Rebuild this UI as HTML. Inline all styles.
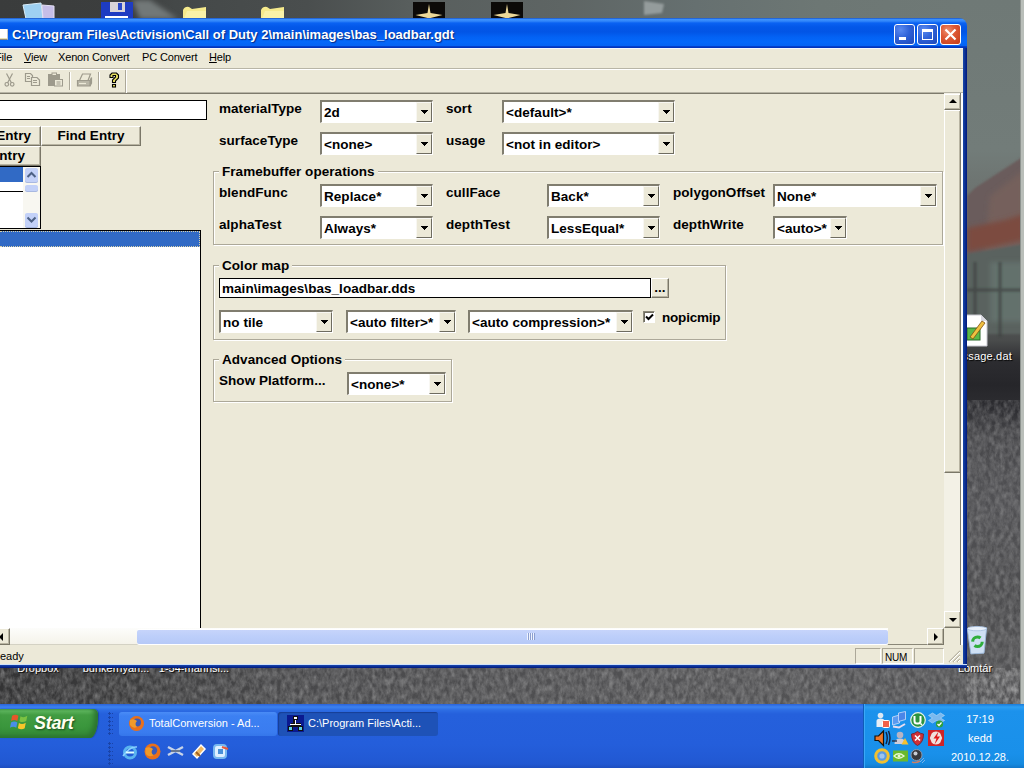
<!DOCTYPE html>
<html><head><meta charset="utf-8"><title>asset manager</title>
<style>
*{box-sizing:border-box;margin:0;padding:0}
html,body{width:1024px;height:768px;overflow:hidden}
body{position:relative;background:#4a4d4c;font-family:"Liberation Sans",sans-serif;font-size:11px;color:#000}
.a{position:absolute}
/* desktop */
#desk{left:0;top:0;width:1024px;height:768px;background:#454847}
#dtop{left:0;top:0;width:1024px;height:20px;background:linear-gradient(90deg,#3a3c3c 0,#3c3e3e 12%,#444848 17%,#4a4e4e 30%,#585e5d 40%,#5e6564 55%,#667070 68%,#6d7774 80%,#707a77 100%)}
#dright{left:960px;top:0;width:64px;height:704px;background:linear-gradient(180deg,#6f7976 0,#727c79 150px,#6e7572 180px,#666866 262px,#5a605c 300px,#4a4c4c 340px,#2c2c30 362px,#26262a 385px,#2e2e32 410px,#47474a 435px,#505053 500px,#4c4c4e 600px,#555557 704px)}
#dbot{left:0;top:660px;width:967px;height:44px;background:linear-gradient(90deg,#333334 0,#3c3c3d 15%,#48484a 30%,#4e4e50 50%,#535355 75%,#515153 100%)}
/* window */
#win{left:-4px;top:18px;width:971px;height:650px}
#wbg{left:0;top:30px;width:971px;height:620px;background:#ece9d8}
#tbar{left:0;top:0;width:971px;height:30px;border-radius:0 8px 0 0;background:linear-gradient(180deg,#1a52c4 0,#3a90ff 1.500px,#3388fa 3px,#0a62f2 5px,#0357e8 9px,#0255e6 14px,#0362f4 19px,#0468fa 24px,#0564f4 27.500px,#0440cc 28.500px,#0030b4 30px)}
#bl{left:0;top:30px;width:4px;height:620px;background:#0c3498}
#br{left:967px;top:30px;width:4px;height:620px;background:linear-gradient(90deg,#1848a8,#00187c)}
#bb{left:0;top:646px;width:971px;height:4px;background:linear-gradient(180deg,#cfe0f8 0,#cfe0f8 1px,#1848b0 1px,#00187c 4px)}
#title{left:16px;top:9px;color:#fff;font-weight:bold;font-size:13px;white-space:nowrap;text-shadow:1px 1px 1px #0a2a80}
.wb{top:6px;width:21px;height:21px;border:1px solid #fff;border-radius:3px;background:radial-gradient(circle at 30% 25%,#5a8af0 0,#2f62d8 45%,#1f48b8 100%)}
#menu{left:4px;top:30px;width:963px;height:21px;background:#ece9d8;border-bottom:1px solid #b8b5a6;border-top:1px solid #f6f8fc}
.mi{top:2px;font-size:11px;white-space:nowrap;letter-spacing:-.15px}
#tool{left:4px;top:51px;width:963px;height:25px;background:#ece9d8;border-top:1px solid #fff;border-bottom:1px solid #7d7a6c;box-shadow:inset 0 -1px 0 #b8b5a6}
/* client */
.lb{font-weight:bold;font-size:13.5px;white-space:nowrap;letter-spacing:.05px;line-height:16px}
.cb{height:23px;background:#fff;border:solid;border-width:2px 1px 1px 2px;border-color:#807d6f #fff #fff #807d6f}
.cb span{position:absolute;left:2px;top:3px;font-weight:bold;font-size:13.5px;white-space:nowrap;letter-spacing:.05px;line-height:16px}
.cb i{position:absolute;right:0;top:0;width:16px;height:20px;background:#ece9d8;border:1px solid;border-color:#f8f7f2 #6e6c60 #6e6c60 #f8f7f2}
.cb i:after{content:"";position:absolute;left:4px;top:7px;width:7px;height:4px;background:linear-gradient(#000,#000) 0 0/7px 1px no-repeat,linear-gradient(#000,#000) 1px 1px/5px 1px no-repeat,linear-gradient(#000,#000) 2px 2px/3px 1px no-repeat,linear-gradient(#000,#000) 3px 3px/1px 1px no-repeat}
.gb{border:1px solid #aca899;box-shadow:1px 1px 0 #fff, inset 1px 1px 0 #fff}
.lg{background:#ece9d8;padding:0 3px}

.btn{background:#ece9d8;border:1px solid;border-color:#fff #7a7768 #7a7768 #fff;box-shadow:inset -1px -1px 0 #b8b4a2}
.tri{position:absolute;width:0;height:0;border:4px solid transparent}
.sbb{width:13px;height:14px;background:#c3d1f8;border-radius:2px;box-shadow:0 1px 0 #a8b8e0}
.pane{border:1px solid;border-color:#aca899 #fff #fff #aca899}

.tk{height:24px;border-radius:3px;color:#fff;font-size:11px;white-space:nowrap}
.dots{width:5px;background:radial-gradient(circle at 1.5px 1.5px,#1a44a8 1px,transparent 1.4px) 0 0/4px 4px}
.clk{width:60px;text-align:center;color:#fff;font-size:11px}
.dl{color:#fff;font-size:11px;text-align:center;white-space:nowrap;text-shadow:1px 1px 1px #000}
</style></head><body>
<div id="desk" class="a"></div>
<div id="dtop" class="a"></div>
<div id="dright" class="a"></div>
<div id="dbot" class="a"></div>
<svg class="a" style="left:0;top:0" width="1024" height="704" viewBox="0 0 1024 704">
 <defs>
  <filter id="gr" x="0" y="0" width="100%" height="100%"><feTurbulence type="fractalNoise" baseFrequency="0.22 0.14" numOctaves="3" seed="7"/><feColorMatrix type="matrix" values="0 0 0 0 0.55  0 0 0 0 0.55  0 0 0 0 0.55  0.9 0.9 0 0 -0.62"/></filter>
  <filter id="bl2"><feGaussianBlur stdDeviation="2.500"/></filter>
  <filter id="bl1"><feGaussianBlur stdDeviation="1"/></filter>
 </defs>
 <!-- smudges in top strip -->
 <path d="M132 0 L150 0 L178 19 L140 19Z" fill="#727878" filter="url(#bl2)"/>
 <path d="M644 1 l20 3 l-2 9 l-18 2z" fill="#949c9c" filter="url(#bl1)"/>
 <!-- building on the right -->
 <path d="M1024 156 L975 188 L967 196 L967 270 L1024 270Z" fill="#6a5c5b" filter="url(#bl1)"/>
 <path d="M1024 170 L990 196 L984 262 L1024 262Z" fill="#75605c" filter="url(#bl2)"/>
 <path d="M967 228 L1005 220 L1024 214 L1024 240 L967 252Z" fill="#7c4c40" filter="url(#bl2)"/>
 <path d="M967 254 L1024 244 v90 h-57z" fill="#5a625f" filter="url(#bl1)"/>
 <path d="M990 262 h34 v60 h-34z" fill="#66756f" filter="url(#bl2)" opacity=".8"/>
 <path d="M975 262 v75 M1000 262 v75 M967 290 h57" stroke="#3c403f" stroke-width="3" filter="url(#bl1)" opacity=".7"/>
 <!-- grass texture -->
 <rect x="0" y="668" width="1024" height="36" filter="url(#gr)" opacity=".55"/>
 <rect x="967" y="400" width="57" height="304" filter="url(#gr)" opacity=".45"/>
 <rect x="1021" y="0" width="3" height="704" fill="#b9beb9"/>
 <rect x="1020" y="0" width="1" height="704" fill="#8e9490"/>
</svg>
<!-- desktop icons (top row, mostly hidden) -->
<svg class="a" style="left:0;top:0" width="540" height="20" viewBox="0 0 540 20">
 <path d="M23 5 L41 3 L43 19 L26 19Z" fill="#9ed0f2" stroke="#d8ecf8" stroke-width="1"/>
 <path d="M42 5 L54 6 L54 19 L43 19Z" fill="#c6bee8" stroke="#e4e0f4" stroke-width="1"/>
 <rect x="101" y="2" width="32" height="18" fill="#1e3cc2"/><rect x="110" y="2" width="15" height="10" fill="#d8d4d8"/><rect x="118" y="3" width="4" height="7" fill="#2a48c8"/><rect x="105" y="16" width="23" height="2" fill="#fff"/>
 <path d="M183 10 q2-4 6-3 l3 2 l14-2 v12 h-23z" fill="#f6ea8c"/><path d="M184 19 l3-8 h19 v8z" fill="#faf2a8"/>
 <path d="M261 10 q2-4 6-3 l3 2 l14-2 v12 h-23z" fill="#f6ea8c"/><path d="M262 19 l3-8 h19 v8z" fill="#faf2a8"/>
 <rect x="413" y="2" width="32" height="17" fill="#0c0a08"/><path d="M429 4 l1.500 9 l12 2 l-12 3 h-3 l-12-3 l12-2z" fill="#ecd898"/>
 <rect x="491" y="2" width="32" height="17" fill="#0c0a08"/><path d="M507 4 l1.500 9 l12 2 l-12 3 h-3 l-12-3 l12-2z" fill="#ecd898"/>
</svg>
<!-- desktop icon labels / right icons -->
<div class="a dl" style="left:8px;top:662px;width:60px">Dropbox</div>
<div class="a dl" style="left:78px;top:662px;width:76px">bunkerhyan...</div>
<div class="a dl" style="left:156px;top:662px;width:76px">1-54-mannsi...</div>
<div class="a dl" style="left:934px;top:350px;width:78px;text-align:right;letter-spacing:.2px">message.dat</div>
<div class="a dl" style="left:948px;top:662px;width:54px">Lomtár</div>
<svg class="a" style="left:960px;top:312px" width="30" height="36" viewBox="0 0 30 36"><path d="M4 3 h17 l6 6 v25 h-23z" fill="#fff" stroke="#c8c8d0"/><path d="M21 3 v6 h6z" fill="#d8d8e0"/><rect x="7" y="16" width="13" height="12" fill="#5ab848" stroke="#2a6a28"/><path d="M10 25 L22 9 L25 11 L13 27Z" fill="#f0c040" stroke="#805010" stroke-width=".8"/></svg>
<svg class="a" style="left:963px;top:624px" width="28" height="32" viewBox="0 0 32 36"><path d="M5 6 L27 4 L24 33 L9 34Z" fill="#cfe0f4" stroke="#9ab8dc"/><ellipse cx="16" cy="5" rx="11" ry="2.500" fill="#e8f0fa" stroke="#a8c0e0"/><circle cx="16.500" cy="20" r="5.500" fill="none" stroke="#2fae3c" stroke-width="3.500" stroke-dasharray="12 5"/></svg>
<div id="win" class="a">
 <div id="wbg" class="a"></div><div id="tbar" class="a"></div>
 <div id="bl" class="a"></div><div id="br" class="a"></div><div id="bb" class="a"></div>
 <div id="title" class="a">C:\Program Files\Activision\Call of Duty 2\main\images\bas_loadbar.gdt</div>
 <div class="a wb" style="left:898px"><div class="a" style="left:4px;top:12px;width:7px;height:3px;background:#fff"></div></div>
 <div class="a wb" style="left:921px"><div class="a" style="left:4px;top:4px;width:11px;height:11px;border:1px solid #fff;border-top:3px solid #fff"></div></div>
 <div class="a wb" style="left:944px;background:radial-gradient(circle at 35% 30%,#ee9070 0,#de5a36 40%,#c43a18 100%)"><svg class="a" style="left:0;top:0" width="19" height="19" viewBox="0 0 19 19"><path d="M4.500 4.500l10 10M14.500 4.500l-10 10" stroke="#fff" stroke-width="2.200"/></svg></div>
 <div class="a" style="left:0;top:11px;width:12px;height:11px;background:#fff;border-right:1px solid #c8c8c8;border-bottom:1px solid #888;box-shadow:0 -1px 0 #e8e0b0 inset"></div>
 <div id="menu" class="a">
  <span class="a mi" style="left:-5px">File</span>
  <span class="a mi" style="left:24px"><u>V</u>iew</span>
  <span class="a mi" style="left:58px">Xenon Convert</span>
  <span class="a mi" style="left:142px">PC Convert</span>
  <span class="a mi" style="left:209px"><u>H</u>elp</span>
 </div>
 <div id="tool" class="a">
  <svg class="a" style="left:0;top:2px" width="130" height="18" viewBox="0 72 130 18">
   <g fill="none" stroke="#9d9a8c" stroke-width="1.2">
    <path d="M6.5 73.5 L11.5 83 M12.5 73.5 L7.5 83"/><circle cx="6.8" cy="84.3" r="1.8"/><circle cx="12.2" cy="84.3" r="1.8"/>
    <path d="M25.5 73.5h5l2 2v6h-7z"/><path d="M27 76.5h3M27 78.500h3" stroke-width="1"/>
    <path d="M31.500 77.500h5.500l2.500 2.500v5.500h-8z" fill="#ece9d8"/><path d="M33 80.500h4M33 82.500h4" stroke-width="1"/>
    <path d="M77.500 80.500h12.500v5.500h-12.500z" fill="#b8b5a6"/><path d="M79.500 80.500l3-6.500h8l-2.500 6.500"/><path d="M90 80.500l1.500-3v5.500l-1.500 3" fill="#9d9a8c"/><path d="M79 83.500h7" stroke="#ece9d8"/>
   </g>
   <rect x="48.500" y="74.500" width="11" height="11" fill="#9d9a8c" stroke="#9d9a8c"/><rect x="52" y="73" width="4.500" height="2.500" fill="#ece9d8" stroke="#9d9a8c"/>
   <rect x="54.500" y="79.500" width="8" height="6.500" fill="#ece9d8" stroke="#9d9a8c"/><path d="M56.500 82h4M56.500 84h4" stroke="#9d9a8c"/>
   <path d="M69.500 72v18M98.500 72v18" stroke="#aca899"/><path d="M70.500 72v18M99.500 72v18" stroke="#fff"/>
   <path d="M110 77.500v-2.500l2-2h4.500l2 2v3l-3 3v1.500h-3v-2.500l3-3v-1.500h-2.500v2z" fill="#e8e060" stroke="#000" stroke-width="1.100"/><rect x="112.500" y="84.500" width="3" height="2.500" fill="#e8e060" stroke="#000" stroke-width="1.100"/>
  </svg>
  <div class="a" style="left:125px;top:0;width:1px;height:23px;background:#aca899"></div>
  <div class="a" style="left:126px;top:0;width:1px;height:23px;background:#fff"></div>
 </div>
</div>

<!-- client area in page coordinates -->
<div id="client" class="a" style="left:0;top:93px;width:963px;height:552px">
 <!-- left panel -->
 <div class="a" style="left:-2px;top:7px;width:209px;height:20px;background:#fff;border:1px solid #000"></div>
 <div class="a btn" style="left:-10px;top:33px;width:51px;height:20px"><span class="lb" style="position:absolute;right:9px;top:1px">New Entry</span></div>
 <div class="a btn" style="left:41px;top:33px;width:100px;height:20px;text-align:center"><span class="lb" style="position:relative;top:1px">Find Entry</span></div>
 <div class="a btn" style="left:-10px;top:53px;width:51px;height:20px"><span class="lb" style="position:absolute;right:15px;top:1px">Del Entry</span></div>
 <div class="a" style="left:-2px;top:73px;width:43px;height:63px;background:#fff;border:1px solid #000"></div>
 <div class="a" style="left:0;top:74px;width:23px;height:15px;background:#316ac5"></div>
 <div class="a" style="left:0;top:98px;width:23px;height:1px;background:#000"></div>
 <div class="a" style="left:23px;top:74px;width:17px;height:61px;background:#f8f7f1"></div>
 <div class="a sbb" style="left:25px;top:75px"><svg width="13" height="14" viewBox="0 0 13 14"><path d="M2.500 9 L6.500 5 L10.500 9" fill="none" stroke="#4d6185" stroke-width="2"/></svg></div>
 <div class="a sbb" style="left:25px;top:92px;height:6px"></div>
 <div class="a sbb" style="left:25px;top:120px"><svg width="13" height="14" viewBox="0 0 13 14"><path d="M2.500 4.500 L6.500 8.500 L10.500 4.500" fill="none" stroke="#4d6185" stroke-width="2"/></svg></div>
 <div class="a" style="left:-2px;top:137px;width:203px;height:399px;background:#fff;border:1px solid #000"></div>
 <div class="a" style="left:0;top:138px;width:200px;height:16px;background:#316ac5;border:1px dotted #d8d0a8;border-left:0"></div>

 <!-- right panel -->
 <span class="a lb" style="left:219px;top:8px">materialType</span>
 <div class="a cb" style="left:320px;top:7px;width:113px"><span>2d</span><i></i></div>
 <span class="a lb" style="left:446px;top:8px">sort</span>
 <div class="a cb" style="left:502px;top:7px;width:173px"><span>&lt;default&gt;*</span><i></i></div>
 <span class="a lb" style="left:219px;top:40px">surfaceType</span>
 <div class="a cb" style="left:320px;top:39px;width:113px"><span>&lt;none&gt;</span><i></i></div>
 <span class="a lb" style="left:446px;top:40px">usage</span>
 <div class="a cb" style="left:502px;top:39px;width:173px"><span>&lt;not in editor&gt;</span><i></i></div>

 <div class="a gb" style="left:213px;top:78px;width:730px;height:74px"></div>
 <span class="a lb lg" style="left:219px;top:71px">Framebuffer operations</span>
 <span class="a lb" style="left:219px;top:92px">blendFunc</span>
 <div class="a cb" style="left:320px;top:91px;width:113px"><span>Replace*</span><i></i></div>
 <span class="a lb" style="left:446px;top:92px">cullFace</span>
 <div class="a cb" style="left:547px;top:91px;width:113px"><span>Back*</span><i></i></div>
 <span class="a lb" style="left:673px;top:92px">polygonOffset</span>
 <div class="a cb" style="left:773px;top:91px;width:164px"><span>None*</span><i></i></div>
 <span class="a lb" style="left:219px;top:124px">alphaTest</span>
 <div class="a cb" style="left:320px;top:123px;width:113px"><span>Always*</span><i></i></div>
 <span class="a lb" style="left:446px;top:124px">depthTest</span>
 <div class="a cb" style="left:547px;top:123px;width:113px"><span>LessEqual*</span><i></i></div>
 <span class="a lb" style="left:673px;top:124px">depthWrite</span>
 <div class="a cb" style="left:773px;top:123px;width:74px"><span>&lt;auto&gt;*</span><i></i></div>

 <div class="a gb" style="left:213px;top:172px;width:513px;height:75px"></div>
 <span class="a lb lg" style="left:219px;top:165px">Color map</span>
 <div class="a" style="left:219px;top:185px;width:432px;height:20px;background:#fff;border:1px solid #000"><span class="lb" style="position:absolute;left:2px;top:2px">main\images\bas_loadbar.dds</span></div>
 <div class="a btn" style="left:651px;top:185px;width:18px;height:20px;text-align:center"><span class="lb" style="position:relative;top:1px;letter-spacing:0">...</span></div>
 <div class="a cb" style="left:219px;top:217px;width:114px"><span>no tile</span><i></i></div>
 <div class="a cb" style="left:346px;top:217px;width:110px"><span>&lt;auto filter&gt;*</span><i></i></div>
 <div class="a cb" style="left:468px;top:217px;width:165px"><span>&lt;auto compression&gt;*</span><i></i></div>
 <div class="a" style="left:643px;top:218px;width:12px;height:12px;background:#fff;border:1px solid;border-color:#8a8778 #fff #fff #8a8778;box-shadow:inset 1px 1px 0 #6e6c60"><svg class="a" style="left:1px;top:1px" width="9" height="9" viewBox="0 0 9 9"><path d="M1 3.5 L3.5 6 L8 1.5" fill="none" stroke="#000" stroke-width="2"/></svg></div>
 <span class="a lb" style="left:662px;top:217px;letter-spacing:-.2px">nopicmip</span>

 <div class="a gb" style="left:213px;top:266px;width:239px;height:43px"></div>
 <span class="a lb lg" style="left:219px;top:259px">Advanced Options</span>
 <span class="a lb" style="left:219px;top:280px">Show Platform...</span>
 <div class="a cb" style="left:347px;top:279px;width:99px"><span>&lt;none&gt;*</span><i></i></div>

 <!-- v scrollbar -->
 <div class="a" style="left:944px;top:0;width:17px;height:535px;background:#f3f1e6"></div>
 <div class="a btn" style="left:944px;top:1px;width:17px;height:16px"><b class="tri" style="left:4px;top:4px;border-bottom:4px solid #000;border-top:0"></b></div>
 <div class="a btn" style="left:944px;top:518px;width:17px;height:17px"><b class="tri" style="left:4px;top:6px;border-top:4px solid #000;border-bottom:0"></b></div>
 <div class="a btn" style="left:944px;top:17px;width:17px;height:363px"></div>
 <!-- h scrollbar -->
 <div class="a" style="left:0;top:535px;width:944px;height:17px;background:linear-gradient(180deg,#fdfdfb,#f5f3ea);border-bottom:1px solid #d4d2c4"></div>
 <div class="a btn" style="left:-7px;top:535px;width:17px;height:17px"><b class="tri" style="left:5px;top:4px;border:4px solid transparent;border-right:4px solid #000;border-left:0"></b></div>
 <div class="a btn" style="left:927px;top:535px;width:17px;height:17px"><b class="tri" style="left:6px;top:4px;border:4px solid transparent;border-left:4px solid #000;border-right:0"></b></div>
 <div class="a" style="left:137px;top:537px;width:751px;height:14px;background:linear-gradient(180deg,#c6d4fb,#bccefa 50%,#b6c9f7);border-radius:2px;box-shadow:0 1px 0 #fff,0 -1px 0 #fff"><div class="a" style="left:390px;top:3px;width:8px;height:7px;background:repeating-linear-gradient(90deg,#eef3ff 0,#eef3ff 1px,#8c9fd0 1px,#8c9fd0 2px)"></div></div>
 <div class="a" style="left:888px;top:535px;width:39px;height:17px;background:#ece9d8;border-bottom:1px solid #8a8778"></div>
</div>
<!-- status bar -->
<div class="a" style="left:0;top:645px;width:963px;height:19px;background:#ece9d8">
 <span class="a" style="left:-8px;top:5px;font-size:11px">Ready</span>
 <div class="a pane" style="left:855px;top:3px;width:26px;height:16px"></div>
 <div class="a pane" style="left:882px;top:3px;width:31px;height:16px"><span style="position:absolute;left:2px;top:3px;font-size:10px;letter-spacing:-.2px">NUM</span></div>
 <div class="a pane" style="left:914px;top:3px;width:30px;height:16px"></div>
 <svg class="a" style="left:948px;top:5px" width="13" height="13" viewBox="0 0 13 13"><path d="M12 1L1 12M12 5L5 12M12 9L9 12" stroke="#b8b4a2" stroke-width="1.400"/><path d="M12 2L2 12M12 6L6 12M12 10L10 12" stroke="#fff" stroke-width="1"/></svg>
</div>
<div class="a" style="left:960px;top:93px;width:1px;height:552px;background:#7d7a6c"></div>
<div class="a" style="left:961px;top:93px;width:2px;height:552px;background:#fff"></div>
<!-- taskbar -->
<div id="task" class="a" style="left:0;top:704px;width:1024px;height:64px;background:linear-gradient(180deg,#2a62d8 0,#3c82f0 3px,#2d6de4 6px,#2560dc 10px,#245edb 40px,#2158d2 60px,#1d4ec0 64px)">
 <div class="a" style="left:0;top:5px;width:98px;height:29px;border-radius:0 5px 8px 0/0 5px 22px 0;background:linear-gradient(180deg,#4aa04a 0,#5cb45c 2px,#429c42 6px,#3a963c 18px,#358c38 25px,#2e7c32 29px);box-shadow:inset -4px -2px 5px #2c7430, 1px 0 1px #1c48a8">
  <svg class="a" style="left:10px;top:3px" width="21" height="21" viewBox="0 0 20 19"><path d="M2 3 Q5 1 8 3 L7 8 Q4 6 1 8Z" fill="#e8562a"/><path d="M10 3.500 Q13 5.500 16.500 3 L15.500 8 Q12 10 9 8.200Z" fill="#7cc242"/><path d="M1 9.500 Q4 7.500 7 9.500 L6 14.500 Q3 12.500 0 14.500Z" fill="#4a8ee8"/><path d="M8.500 10 Q11.500 12 15 9.800 L14 15 Q11 17 7.500 15Z" fill="#f8c62a"/></svg>
  <span class="a" style="left:34px;top:4px;font-size:18px;font-weight:bold;font-style:italic;color:#fffff0;text-shadow:1px 1px 2px #1a4a1a;letter-spacing:-.3px">Start</span>
 </div>
 <div class="a dots" style="left:108px;top:8px;height:24px"></div>
 <div class="a dots" style="left:108px;top:38px;height:24px"></div>
 <div class="a tk" style="left:119px;top:8px;width:158px;background:linear-gradient(180deg,#4a8cf6,#3c80f2 4px,#3a7cf0 20px,#3576ea)">
   <svg class="a" style="left:9px;top:3px" width="17" height="17" viewBox="0 0 17 17"><circle cx="8.5" cy="8.5" r="7.5" fill="#e8701c"/><circle cx="9" cy="7.5" r="4" fill="#3a5ab8"/><path d="M2 5 Q6 3 9 6 Q6 9 9 12 Q5 14 2 10Z" fill="#f09a2a"/></svg>
   <span class="a" style="left:30px;top:5px">TotalConversion - Ad...</span></div>
 <div class="a tk" style="left:278px;top:8px;width:160px;background:#1e52b7;box-shadow:inset 1px 1px 1px #173f95">
   <svg class="a" style="left:9px;top:3px" width="17" height="17" viewBox="0 0 17 17"><rect width="17" height="17" fill="#0a1a90"/><path d="M6 1h5v4h-2v3h5v3h2v5h-5v-4h-5v4h-5v-5h3v-3h2z" fill="#111"/><path d="M7 2h3v2h-3zM2 12h3v3h-3zM12 12h3v3h-3zM8 5h1v4h-1zM3 9h11v1h-11z" fill="#fff"/><path d="M2 12h3v3h-3zM12 12h3v3h-3z" fill="#5fd0e0"/></svg>
   <span class="a" style="left:30px;top:5px">C:\Program Files\Acti...</span></div>
 <!-- quick launch -->
 <div class="a" style="left:122px;top:40px;width:16px;height:16px"><svg width="16" height="16" viewBox="0 0 16 16"><circle cx="8" cy="8.5" r="5.5" fill="none" stroke="#5ab4f0" stroke-width="3"/><path d="M1 12 Q8 2 15 3" fill="none" stroke="#8ad0ff" stroke-width="1.5"/><path d="M4 8.5h8" stroke="#dff" stroke-width="2"/></svg></div>
 <div class="a" style="left:144px;top:39px;width:17px;height:17px"><svg width="17" height="17" viewBox="0 0 17 17"><circle cx="8.5" cy="8.5" r="8" fill="#e8701c"/><circle cx="9" cy="7.5" r="4.2" fill="#3a5ab8"/><path d="M1.5 5 Q6 3 9 6 Q6 9 9.5 12.5 Q4 15 1.5 10Z" fill="#f09a2a"/></svg></div>
 <div class="a" style="left:167px;top:41px;width:17px;height:13px"><svg width="17" height="13" viewBox="0 0 17 13"><path d="M1 2 L16 10 M16 2 L1 10" stroke="#c8d4e8" stroke-width="2.5"/><path d="M4 6 h9" stroke="#6a7890" stroke-width="2"/></svg></div>
 <div class="a" style="left:190px;top:39px;width:17px;height:17px"><svg width="17" height="17" viewBox="0 0 17 17"><path d="M3 11 L11 2 L15 6 L7 15Z" fill="#f0b860" stroke="#fff" stroke-width="1.5"/><path d="M6 9 L10 13" stroke="#a06020" stroke-width="2"/></svg></div>
 <div class="a" style="left:213px;top:39px;width:16px;height:17px"><svg width="16" height="17" viewBox="0 0 16 17"><rect x="1" y="2" width="12" height="13" rx="3" fill="#dff0ff" stroke="#78b8f0" stroke-width="2"/><path d="M5 6h5v5h-5z" fill="#4a90d8"/><path d="M9 4 L15 6" stroke="#e85a3a" stroke-width="2"/></svg></div>
 <!-- tray -->
 <div class="a" style="left:863px;top:0;width:161px;height:64px;background:linear-gradient(180deg,#1a7ad8 0,#2da0f4 3px,#1c92ec 7px,#1990ea 50px,#158ae0 60px,#1276c8 64px);border-left:1px solid #0f5cb8;box-shadow:inset 1px 0 0 #3aa8f8"></div>
<svg class="a" style="left:872px;top:6px" width="76" height="56" viewBox="872 710 76 56">
  <!-- row1 -->
  <circle cx="880.500" cy="715.500" r="2.800" fill="#dce8f4"/><path d="M876.500 727v-6q0-2.500 4-2.500t4 2.500v6z" fill="#e8eef6"/><rect x="882.500" y="720.500" width="7" height="7" rx="1" fill="#f06048" stroke="#fff" stroke-width="1"/>
  <path d="M892.500 717l7-2v8l-7 2z" fill="#5a9af0" stroke="#cfe0fa" stroke-width=".8"/><path d="M898.500 713l7-1.500v8l-7 2z" fill="#4a86e8" stroke="#cfe0fa" stroke-width=".8"/><path d="M893 726.500l6 1l6-3.500" stroke="#e8dcf0" stroke-width="2" fill="none"/>
  <circle cx="918" cy="720" r="7.300" fill="#2c9440" stroke="#e8f4ea" stroke-width="1.200"/><path d="M914.500 716v5q0 2.500 2.500 2.500h1q2.500 0 2.500-2.500v-5" stroke="#fff" stroke-width="2" fill="none"/><path d="M920.500 723.500l1.500 1.500" stroke="#fff" stroke-width="1.600"/>
  <path d="M932.500 713l4 2.500l4-2.500l4 2.500l-4 2.500l4 2.500l-4 2.500l-4-2.500l-4 2.500l-4-2.500l4-2.500l-4-2.500z" fill="#7ab8ee" stroke="#b8dcf8" stroke-width=".6"/><circle cx="939.500" cy="724" r="3.600" fill="#2fa03c"/><path d="M937.500 724l1.500 1.500l2.500-3" stroke="#fff" stroke-width="1.200" fill="none"/>
  <!-- row2 -->
  <path d="M875 736h3.500l5-5v14.500l-5-5h-3.500z" fill="#f07828" stroke="#1a1208" stroke-width="1.200"/><path d="M886 732q2.500 6 0 12M888.500 731q3 7 0 14" stroke="#14203c" stroke-width="1.400" fill="none"/>
  <circle cx="900" cy="735" r="3.300" fill="#b8b4c4"/><path d="M894.500 744q0-5.500 5.500-5.500t5.500 5.500z" fill="#d0ccd8"/><path d="M892 741h5" stroke="#283048" stroke-width="1.400"/><path d="M905 738l3.500 6.500h-7z" fill="#f8c030"/>
  <path d="M917.500 731.500q3.500 2.500 6 2.500q0 8.500-6 11.500q-6-3-6-11.500q2.500 0 6-2.500z" fill="#d03038" stroke="#7a1820" stroke-width=".8"/><path d="M915 735.500l5 5M920 735.500l-5 5" stroke="#fff" stroke-width="1.600"/>
  <rect x="928" y="730" width="16" height="16" fill="#d02428"/><circle cx="936" cy="738" r="6.500" fill="#f0e0dc"/><path d="M938.500 731.500l-5 7h3l-2 6l5.500-8h-3z" fill="#e01818"/><path d="M931 733l-2 5l2 5M941 733l2 5l-2 5" stroke="#d02428" stroke-width="1.600" fill="none"/>
  <!-- row3 -->
  <circle cx="882" cy="756" r="6.300" fill="#5a9ae0" stroke="#f0c030" stroke-width="3"/><circle cx="882" cy="756" r="2.600" fill="#9cc4f0"/>
  <rect x="893" y="750.500" width="15" height="11" fill="#6ab82c"/><path d="M894 756q4.500-4.500 10 0q-5.500 4.500-10 0z" fill="none" stroke="#e8f8d0" stroke-width="1.300"/><circle cx="899" cy="756" r="1.500" fill="#e8f8d0"/>
  <circle cx="916.500" cy="755" r="5.500" fill="#38383c" stroke="#8898b0" stroke-width="1"/><circle cx="915.500" cy="753.500" r="2" fill="#c8ccd4"/><path d="M912 762q4 1.500 8-1" stroke="#c88068" stroke-width="1.500" fill="none"/><path d="M920 762l4-4M922 763l3-3" stroke="#7ab0e8" stroke-width="1"/>
 </svg>
 <span class="a clk" style="left:950px;top:9px">17:19</span>
 <span class="a clk" style="left:950px;top:28px">kedd</span>
 <span class="a clk" style="left:950px;top:47px">2010.12.28.</span>
</div>
</body></html>
